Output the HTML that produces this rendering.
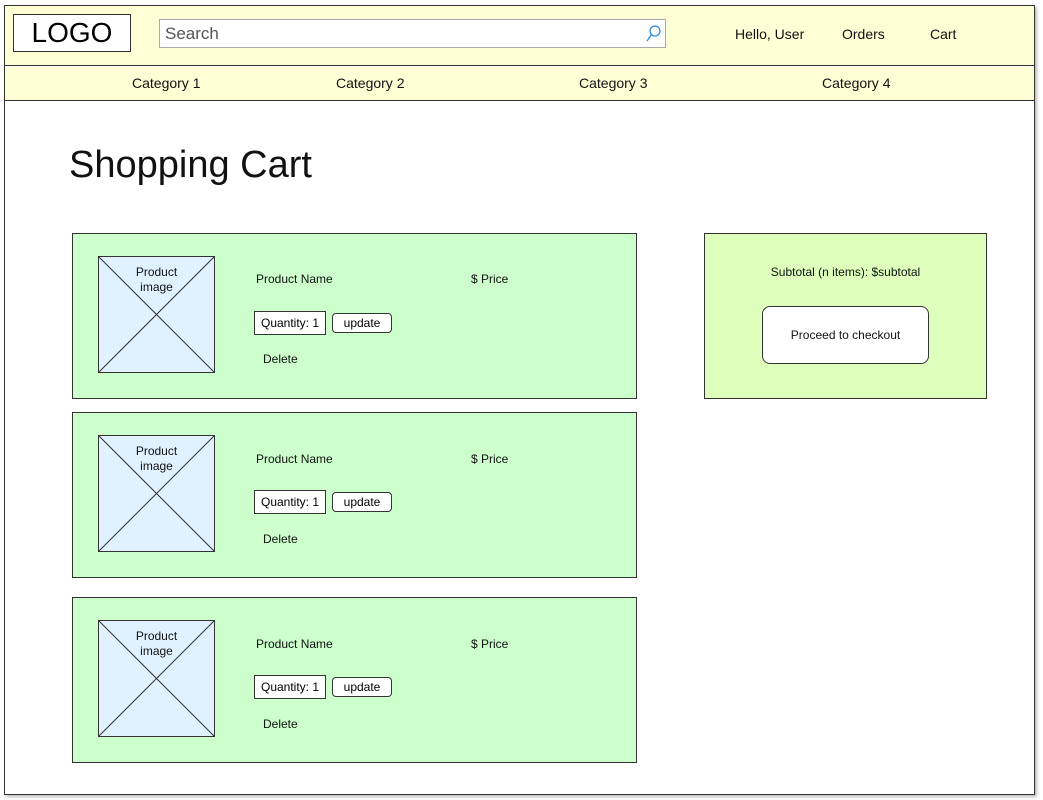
<!DOCTYPE html>
<html><head><style>
*{margin:0;padding:0;box-sizing:border-box}
body{width:1043px;height:800px;background:#fff;position:relative;font-family:"Liberation Sans",sans-serif;overflow:hidden}
.a{position:absolute}
.frame{left:4px;top:5px;width:1031px;height:790px;border:1.5px solid #333;background:#fff;box-shadow:2px 2px 3px #bbb}
.hdr{left:5px;top:6px;width:1029px;height:60px;background:#ffffd6;border-bottom:1.5px solid #333}
.nav{left:5px;top:67px;width:1029px;height:34px;background:#ffffd6;border-bottom:1.5px solid #333}
.t{font-size:14px;color:#111}
.card{left:72px;width:565px;height:166px;background:#ccffcc;border:1px solid #333}
.img{left:25px;top:22px;width:117px;height:117px;background:#e0f2ff;border:1px solid #333}
.s{font-size:12px;color:#111}
.qty{left:181px;top:77px;width:72px;height:24px;border:1px solid #333;background:#fff;font-size:12px;line-height:22px;text-align:center}
.upd{left:259px;top:79px;width:60px;height:20px;border:1px solid #333;border-radius:4px;background:#fff;font-size:12px;line-height:18px;text-align:center}
</style></head><body>
<div class="a frame"></div>
<div class="a hdr"></div>
<div class="a nav"></div>
<div class="a" style="left:13px;top:14px;width:118px;height:38px;border:1.5px solid #333;background:#fff;font-size:28px;line-height:36px;text-align:center">LOGO</div>
<div class="a" style="left:159px;top:19px;width:507px;height:29px;border:1px solid #aaa;background:#fff;font-size:17px;line-height:27px;padding-left:5px;color:#555">Search</div>
<svg class="a" style="left:645px;top:24px" width="16" height="20"><circle cx="10" cy="7" r="5" fill="none" stroke="#2a8ce0" stroke-width="1.3"/><line x1="6.5" y1="10.5" x2="2" y2="17" stroke="#2a8ce0" stroke-width="1.3"/></svg>
<div class="a t" style="left:735px;top:26px">Hello, User</div>
<div class="a t" style="left:842px;top:26px">Orders</div>
<div class="a t" style="left:930px;top:26px">Cart</div>
<div class="a t" style="left:132px;top:75px">Category 1</div>
<div class="a t" style="left:336px;top:75px">Category 2</div>
<div class="a t" style="left:579px;top:75px">Category 3</div>
<div class="a t" style="left:822px;top:75px">Category 4</div>
<div class="a" style="left:69px;top:144px;font-size:38px;color:#111">Shopping Cart</div>

<div class="a card" style="top:233px">
 <div class="a img"><svg width="115" height="115" style="position:absolute;left:0;top:0"><line x1="0" y1="0" x2="115" y2="115" stroke="#333"/><line x1="115" y1="0" x2="0" y2="115" stroke="#333"/></svg><div class="a s" style="left:0;width:115px;top:8px;text-align:center;line-height:15px">Product<br>image</div></div>
 <div class="a s" style="left:183px;top:38px">Product Name</div>
 <div class="a s" style="left:398px;top:38px">$ Price</div>
 <div class="a qty">Quantity: 1</div><div class="a upd">update</div>
 <div class="a s" style="left:190px;top:118px">Delete</div>
</div>
<div class="a card" style="top:412px">
 <div class="a img"><svg width="115" height="115" style="position:absolute;left:0;top:0"><line x1="0" y1="0" x2="115" y2="115" stroke="#333"/><line x1="115" y1="0" x2="0" y2="115" stroke="#333"/></svg><div class="a s" style="left:0;width:115px;top:8px;text-align:center;line-height:15px">Product<br>image</div></div>
 <div class="a s" style="left:183px;top:39px">Product Name</div>
 <div class="a s" style="left:398px;top:39px">$ Price</div>
 <div class="a qty">Quantity: 1</div><div class="a upd">update</div>
 <div class="a s" style="left:190px;top:119px">Delete</div>
</div>
<div class="a card" style="top:597px">
 <div class="a img"><svg width="115" height="115" style="position:absolute;left:0;top:0"><line x1="0" y1="0" x2="115" y2="115" stroke="#333"/><line x1="115" y1="0" x2="0" y2="115" stroke="#333"/></svg><div class="a s" style="left:0;width:115px;top:8px;text-align:center;line-height:15px">Product<br>image</div></div>
 <div class="a s" style="left:183px;top:39px">Product Name</div>
 <div class="a s" style="left:398px;top:39px">$ Price</div>
 <div class="a qty">Quantity: 1</div><div class="a upd">update</div>
 <div class="a s" style="left:190px;top:119px">Delete</div>
</div>

<div class="a" style="left:704px;top:233px;width:283px;height:166px;background:#ddffbb;border:1px solid #333">
 <div class="a s" style="left:0;width:281px;top:31px;text-align:center">Subtotal (n items): $subtotal</div>
 <div class="a s" style="left:57px;top:72px;width:167px;height:58px;background:#fff;border:1px solid #333;border-radius:8px;line-height:56px;text-align:center">Proceed to checkout</div>
</div>
</body></html>
